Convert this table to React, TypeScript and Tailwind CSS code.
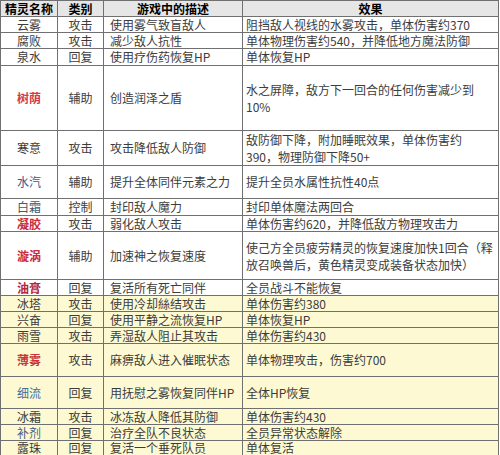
import React from "react";

type Row = {
  name: string;
  nameColor?: string;
  bold?: boolean;
  type: string;
  desc: string;
  effect: React.ReactNode;
  h: number;
  yellow?: boolean;
  multi?: boolean;
};

const rows: Row[] = [
  { name: "云雾", type: "攻击", desc: "使用雾气致盲敌人", effect: "阻挡敌人视线的水雾攻击，单体伤害约370", h: 16 },
  { name: "腐败", type: "攻击", desc: "减少敌人抗性", effect: "单体物理伤害约540，并降低地方魔法防御", h: 16 },
  { name: "泉水", type: "回复", desc: "使用疗伤药恢复HP", effect: "单体恢复HP", h: 17 },
  {
    name: "树荫", nameColor: "text-[#d23a4c]", bold: true, type: "辅助", desc: "创造润泽之盾",
    effect: (<>水之屏障，敌方下一回合的任何伤害减少到<br />10%</>), h: 65, multi: true,
  },
  {
    name: "寒意", type: "攻击", desc: "攻击降低敌人防御",
    effect: (<>敌防御下降，附加睡眠效果，单体伤害约<br />390，物理防御下降50+</>), h: 32, multi: true,
  },
  { name: "水汽", nameColor: "text-[#3a5a8c]", type: "辅助", desc: "提升全体同伴元素之力", effect: "提升全员水属性抗性40点", h: 33 },
  { name: "白霜", nameColor: "text-[#3e5a6c]", type: "控制", desc: "封印敌人魔力", effect: "封印单体魔法两回合", h: 17 },
  { name: "凝胶", nameColor: "text-[#c92a3e]", bold: true, type: "攻击", desc: "弱化敌人攻击", effect: "单体伤害约620，并降低敌方物理攻击力", h: 16 },
  {
    name: "漩涡", nameColor: "text-[#c92a3e]", bold: true, type: "辅助", desc: "加速神之恢复速度",
    effect: (<>使己方全员疲劳精灵的恢复速度加快1回合（释<br />放召唤兽后，黄色精灵变成装备状态加快）</>), h: 48, multi: true,
  },
  { name: "油膏", nameColor: "text-[#b3283e]", bold: true, type: "回复", desc: "复活所有死亡同伴", effect: "全员战斗不能恢复", h: 16 },
  { name: "冰塔", type: "攻击", desc: "使用冷却絲结攻击", effect: "单体伤害约380", h: 16, yellow: true },
  { name: "兴奋", type: "回复", desc: "使用平静之流恢复HP", effect: "单体恢复HP", h: 16, yellow: true },
  { name: "雨雪", type: "攻击", desc: "弄湿敌人阻止其攻击", effect: "单体伤害约430", h: 16, yellow: true },
  { name: "薄雾", nameColor: "text-[#c8343a]", bold: true, type: "攻击", desc: "麻痹敌人进入催眠状态", effect: "单体物理攻击，伤害约700", h: 33, yellow: true },
  { name: "细流", nameColor: "text-[#3d6da0]", type: "回复", desc: "用抚慰之雾恢复同伴HP", effect: "全体HP恢复", h: 32, yellow: true },
  { name: "冰霜", type: "攻击", desc: "冰冻敌人降低其防御", effect: "单体伤害约430", h: 16, yellow: true },
  { name: "补剂", nameColor: "text-[#4a5c82]", type: "回复", desc: "治疗全队不良状态", effect: "全员异常状态解除", h: 16, yellow: true },
  { name: "露珠", type: "回复", desc: "复活一个垂死队员", effect: "单体复活", h: 15, yellow: true },
];

const cell = "border border-[#707070] p-0 align-middle overflow-hidden whitespace-nowrap";

export default function App() {
  return (
    <div
      className="w-[500px] h-[455px] bg-white overflow-hidden text-[12px] text-[#3c3c3c]"
      style={{ fontFamily: '"Noto Sans CJK SC", "Noto Sans", sans-serif' }}
    >
      <table className="table-fixed border-collapse w-[498px] leading-[12px]">
        <colgroup>
          <col className="w-[57px]" />
          <col className="w-[46px]" />
          <col className="w-[139px]" />
          <col className="w-[256px]" />
        </colgroup>
        <thead>
          <tr className="h-[16px] bg-[#e6e6e6] text-black font-bold">
            <th className={`${cell} text-center`}>精灵名称</th>
            <th className={`${cell} text-center`}>类别</th>
            <th className={`${cell} text-center`}>游戏中的描述</th>
            <th className={`${cell} text-center`}>效果</th>
          </tr>
        </thead>
        <tbody>
          {rows.map((r) => (
            <tr
              key={r.name}
              className={r.yellow ? "bg-[#fdfad3]" : "bg-white"}
              style={{ height: r.h }}
            >
              <td className={`${cell} text-center ${r.nameColor ?? ""} ${r.bold ? "font-semibold" : ""}`}>
                {r.name}
              </td>
              <td className={`${cell} text-center`}>{r.type}</td>
              <td className={`${cell} pl-[6px]`}>{r.desc}</td>
              <td className={`${cell} pl-[3px] ${r.multi ? "leading-[17px]" : ""}`}>{r.effect}</td>
            </tr>
          ))}
        </tbody>
      </table>
    </div>
  );
}
